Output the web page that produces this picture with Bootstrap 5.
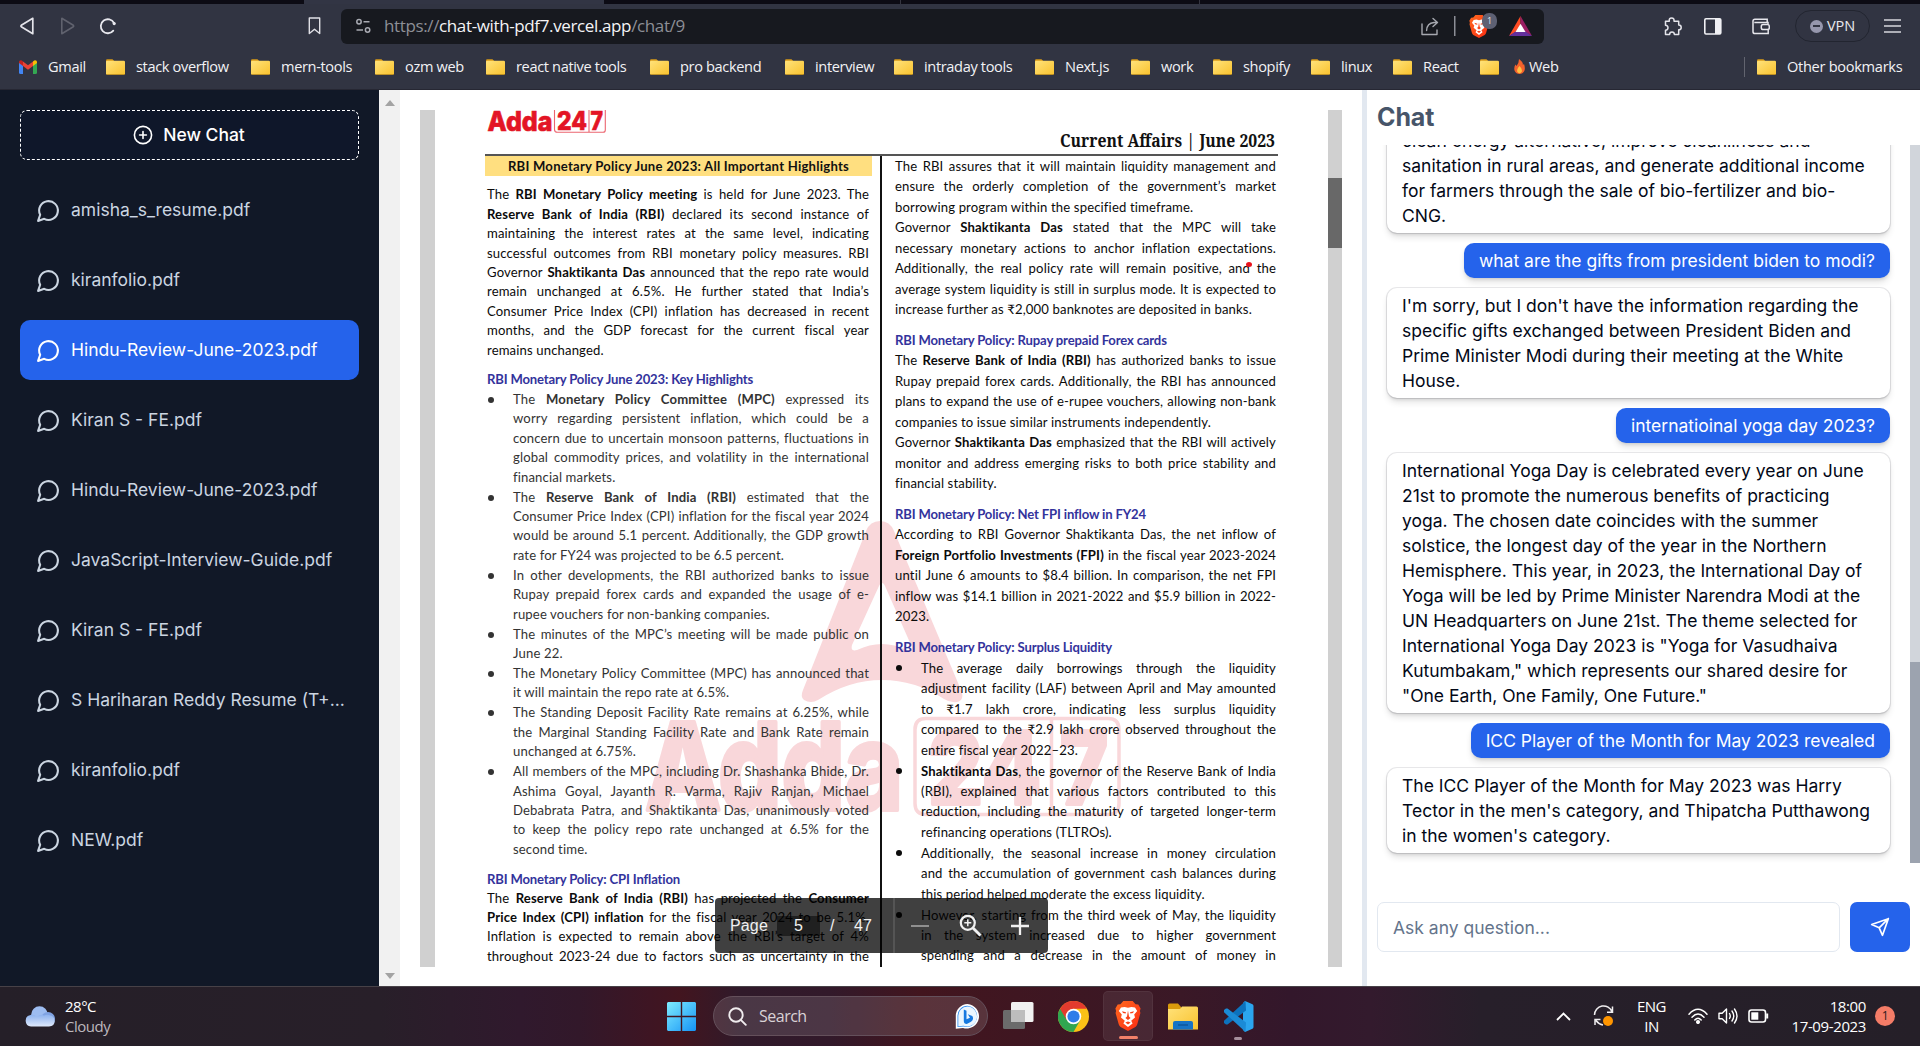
<!DOCTYPE html>
<html lang="en">
<head>
<meta charset="utf-8">
<meta name="viewport" content="width=device-width, initial-scale=1">
<title>Chat with PDF</title>
<link href="https://cdn.jsdelivr.net/npm/bootstrap@5.3.0/dist/css/bootstrap.min.css" rel="stylesheet">
<style>
  html, body { height: 100%; }
  body { font-family: Inter, "Liberation Sans", sans-serif; overflow: hidden; background: #fff; color: #020817; }
  svg { display: block; flex: none; }
  .shell { width: 1920px; height: 1046px; }
  .ui-font { font-family: "Open Sans", "Noto Sans", sans-serif; }

  /* browser chrome */
  .tabstrip { height: 4px; background: #0c0b14; display: grid; grid-template-columns: 304px 300px 297px 299px 1fr; }
  .tabstrip .cur { background: #323544; }
  .tabstrip .sep { border-right: 1px solid #34343f; }
  .browser { background: #313442; height: 86px; border-bottom: 1px solid #262733; }
  .toolbar { height: 45px; padding-top: 5px; }
  .tools { display: grid; grid-template-columns: 40px 39px 209px 1fr; width: 341px; height: 34px; padding-left: 20px; }
  .omni { width: 1203px; height: 35px; border-radius: 6px; background: #17191f; color: #8d8f96; font-size: 17px; letter-spacing: -.37px; padding: 0 0 1px 14px; }
  .omni b { font-weight: 400; color: #f4f4f6; }
  .omni-end { display: grid; grid-template-columns: 33px 15px 40px 35px; align-items: center; }
  .shield { position: relative; width: 20px; height: 22px; }
  .shield span { position: absolute; left: 13px; top: -2px; width: 15px; height: 16px; border-radius: 7px; background: #5d6073; color: #e8e8ee; font-size: 9px; line-height: 16px; text-align: center; letter-spacing: 0; }
  .right-tools { display: grid; grid-template-columns: 40px 48px 43px 89px 20px; align-items: center; height: 34px; margin-left: 120px; }
  .vpn { width: 75px; height: 32px; border: 1px solid #222530; border-radius: 16px; color: #e9e9ee; font-size: 14.5px; letter-spacing: -.1px; }
  .vpn i { width: 13px; height: 13px; border-radius: 50%; background: #9697ad; }
  .vpn i::after { content: ""; width: 7px; height: 2px; background: #313442; }
  .bookmarks { display: grid; grid-template-columns: 87px 145px 124px 111px 164px 135px 109px 141px 96px 82px 98px 82px 87px 264px 1fr; padding-left: 19px; height: 35px; color: #f2f2f5; font-size: 14.6px; letter-spacing: -.36px; }
  .bookmarks > div { display: flex; align-items: center; gap: 11px; white-space: nowrap; }
  .bookmarks .other { border-left: 1px solid #62646f; padding-left: 12px; height: 20px; align-self: center; letter-spacing: -.3px; }

  /* sidebar */
  .side { width: 379px; background: #111827; padding: 20px 20px 0; }
  .newchat { height: 50px; border: 1px dashed #fff; border-radius: 7px; color: #fff; background: #0f172a; font-size: 17.5px; font-weight: 500; gap: 10px; margin-bottom: 20px; padding-right: 1px; }
  .chatrow { height: 60px; margin-bottom: 10px; border-radius: 10px; padding: 0 15px 0 16px; gap: 10px; color: #cbd5e1; font-size: 17.5px; }
  .chatrow.on { background: #2563eb; color: #fff; }
  .sbar { width: 21px; background: #f1f1f1; padding: 10px 0 7px; }
  .sbar i { border: 5px solid transparent; width: 0; height: 0; }
  .sbar .u { border-bottom: 6px solid #a3a3a3; border-top: 0; }
  .sbar .d { border-top: 6px solid #a3a3a3; border-bottom: 0; }

  /* document viewer */
  .viewer { width: 962px; padding: 20px 20px 19px; }
  .gutter { background: #d0d0d0; }
  .gutter.l { width: 15px; }
  .gutter.r { width: 14px; padding-top: 68px; }
  .gutter.r i { display: block; height: 70px; background: #686868; }
  .sheet { position: relative; width: 893px; overflow: hidden; padding: 0 50px; font-family: Lato, "Liberation Sans", sans-serif; font-size: 13.1px; letter-spacing: .14px; color: #0b0b0b; }
  .sheet > .wm { position: absolute; left: 0; top: 0; z-index: 0; letter-spacing: 0; }
  .head { height: 46px; border-bottom: 2px solid #555; letter-spacing: 0; }
  .cols { position: relative; height: 811px; }
  .colL { width: 397px; border-right: 2px solid #111; padding: 0 11px 0 2px; --lh: 19.45px; }
  .colR { flex: 1; padding: 0 2px 0 13px; --lh: 20.45px; }
  .band { background: #ffdf80; height: 20px; line-height: 20px; margin: 0 -3px 9.2px -2px; text-align: center; font-weight: 700; color: #111; letter-spacing: .24px; }
  .ln { line-height: var(--lh); height: var(--lh); white-space: nowrap; text-align: justify; text-align-last: justify; }
  .ln.end { text-align-last: left; }
  .hd { line-height: 20px; font-weight: 700; color: #33339c; letter-spacing: -.16px; white-space: nowrap; margin-top: 9.3px; }
  .colR .hd { margin-top: 10.5px; line-height: 20.4px; }
  .pts { list-style: none; margin: .4px 0 0; padding: 0; }
  .pts li { padding-left: 26px; margin-bottom: .5px; position: relative; }
  .pts li::before { content: ""; position: absolute; left: 1px; top: 7px; width: 6px; height: 6px; border-radius: 50%; background: currentColor; }
  .colL .pts { color: #333; }
  .cursor-dot { position: absolute; left: 811px; top: 152px; width: 6px; height: 5px; border-radius: 50%; background: #e8131d; }
  .pager { position: absolute; left: 280px; top: 788px; width: 333px; height: 55px; background: rgba(0,0,0,.75); border-radius: 4px; color: #f1f1f1; font-family: "Liberation Sans", sans-serif; font-size: 16px; display: grid; grid-template-columns: 47px 53px 24px 39px 18px 48px 52px 1fr; padding-left: 15px; align-items: center; }
  .pager .num { width: 43px; height: 20px; line-height: 19px; text-align: center; background: rgba(0,0,0,.5); }
  .pager .bar { width: 2px; height: 55px; background: #555; }

  /* chat panel */
  .panel { width: 558px; border-left: 5px solid #e2e8f0; }
  .panel h1 { font-size: 25px; font-weight: 700; color: #475569; line-height: 35px; margin: 10px 0 10px 10px; letter-spacing: -.1px; }
  .feed { height: 718px; overflow: hidden; }
  .track { width: 10px; background: #d1d5db; padding-top: 517px; }
  .track i { display: block; height: 201px; background: #9ca3af; }
  .msgs { width: 543px; padding: 0 20px 10px 20px; gap: 10px; justify-content: flex-end; }
  .bubble { font-size: 17.5px; line-height: 25px; padding: 5px 15px; border-radius: 10px; white-space: nowrap; box-shadow: 0 0 0 1px rgba(17,24,39,.1), 0 5px 7px -1px rgba(0,0,0,.12), 0 2px 4px -2px rgba(0,0,0,.2); }
  .bubble.me { align-self: flex-end; background: #2563eb; color: #fff; box-shadow: 0 5px 7px -1px rgba(0,0,0,.12), 0 2px 4px -2px rgba(0,0,0,.2); }
  .ask { padding: 39px 10px 0; gap: 10px; }
  .ask input { width: 463px; height: 50px; border: 1px solid #e2e8f0; border-radius: 7px; font-size: 17.5px; padding: 0 15px; }
  .ask input::placeholder { color: #64748b; opacity: 1; }
  .ask button { width: 60px; height: 50px; border: 0; border-radius: 7px; background: #2563eb; }

  /* taskbar */
  .taskbar { height: 60px; border-top: 1px solid #474147; background: linear-gradient(90deg,#251f28 0,#281f29 380px,#30192d 520px,#32182a 580px,#3e1523 650px,#42151f 680px,#301a2a 740px,#32192a 830px,#42151e 920px,#3a1826 1180px,#33172b 1290px,#331a2d 1370px,#271f2a 1480px,#251f28 100%); color: #fff; display: grid; grid-template-columns: 40px 602px 46px 290px 55px 45px 65px 55px 333px 37px 43px 52px 30px 30px 30px 1fr; padding-left: 25px; padding-bottom: 1px; align-items: center; font-size: 15px; letter-spacing: -.5px; line-height: 20px; }
  .find { width: 275px; height: 40px; border: 1px solid #64505b; border-radius: 20px; background: rgba(255,255,255,.13); padding: 0 7px 0 14px; color: #d9d2d6; font-size: 16px; }
  .tile { width: 50px; height: 50px; border-radius: 5px; background: rgba(255,255,255,.07); border: 1px solid rgba(255,255,255,.05); position: relative; }
  .tile::after { content: ""; position: absolute; left: 15px; bottom: 1px; width: 19px; height: 3px; border-radius: 2px; background: #f08069; }
  .vs { position: relative; }
  .vs::after { content: ""; position: absolute; left: 11px; top: 36px; width: 8px; height: 3px; border-radius: 2px; background: #a58f9c; }
  .cond { color: #bdb8be; }
  .clock { width: 88px; letter-spacing: -.38px; }
  .alertdot { width: 20px; height: 20px; border-radius: 50%; background: #f47c67; color: #2b1a1c; font-size: 12px; text-align: center; line-height: 20px; margin-left: 9px; }
</style>
<script src="https://cdn.jsdelivr.net/npm/bootstrap@5.3.0/dist/js/bootstrap.bundle.min.js"></script>
</head>
<body>
<svg width="0" height="0" class="position-absolute" aria-hidden="true">
  <defs>
    <linearGradient id="gf" x1="0" y1="0" x2="1" y2="1"><stop offset="0" stop-color="#ffe27a"/><stop offset="1" stop-color="#f9c22e"/></linearGradient>
    <linearGradient id="gw" x1="0" y1="0" x2="1" y2="1"><stop offset="0" stop-color="#7fecff"/><stop offset="1" stop-color="#1593f5"/></linearGradient>
    <linearGradient id="gc" x1="0" y1="0" x2="0" y2="1"><stop offset="0" stop-color="#8eb2ee"/><stop offset="1" stop-color="#dfe9fb"/></linearGradient>
    <linearGradient id="gb" x1="0" y1="0" x2="1" y2="1"><stop offset="0" stop-color="#ff6a1f"/><stop offset="1" stop-color="#fb2a12"/></linearGradient>
    <symbol id="folder" viewBox="0 0 19 16"><path d="M0 1.500Q0 .3 1.200.3H6.500L8.200 2V5H0Z" fill="#d99a17"/><rect x="0" y="1.800" width="19" height="14" rx="1.300" fill="url(#gf)"/><path d="M.5 15.600H18.500" stroke="#b98618" stroke-width=".7"/></symbol>
    <symbol id="bubble" viewBox="0 0 24 24"><path d="M7.900 20A9 9 0 1 0 4 16.100L2 22Z" fill="none" stroke="currentColor" stroke-width="2" stroke-linecap="round" stroke-linejoin="round"/></symbol>
    <symbol id="lion" viewBox="0 0 26 30"><path d="M5.500 3.200 8.300 0H17.700L20.500 3.200 23.300 3.600 25.600 7.600 24.900 10 25.400 12 22.300 23.200Q21.800 25 20.400 26L13 30 5.600 26Q4.200 25 3.700 23.200L.6 12 1.100 10 .4 7.600 2.700 3.600Z" fill="url(#gb)"/><path d="M6 6.500 9.600 6 13 6.800 16.400 6 20 6.500 22.200 10 19.200 13.600 20 16.500 16.200 19.800 17.600 22.500 13 26 8.400 22.500 9.800 19.800 6 16.500 6.800 13.600 3.800 10Z" fill="#fff"/><path d="M7 10.200 11 11.300 10.600 12.600 8 12ZM19 10.200 15 11.300 15.400 12.600 18 12ZM13 9.500 12 15.500 10.400 17 13 19 15.600 17 14 15.500Z" fill="#f8431a"/><path d="M10.300 21.600 13 20.400 15.700 21.600 13 23.400Z" fill="#f8431a"/></symbol>
  </defs>
</svg>

<div class="shell d-flex flex-column">
  <div class="tabstrip"><div></div><div class="cur"></div><div class="sep"></div><div class="sep"></div><div></div></div>

  <header class="browser ui-font">
    <div class="toolbar d-flex">
      <div class="tools align-items-center">
        <svg width="15" height="18" viewBox="0 0 15 18" fill="none" stroke="#e4e4ea" stroke-width="1.700" stroke-linejoin="round"><path d="M12.800 1.300V16.700L1.300 9.800Q.6 9 1.300 8.200Z"/></svg>
        <svg width="15" height="18" viewBox="0 0 15 18" fill="none" stroke="#60626e" stroke-width="1.600" stroke-linejoin="round"><path d="M1.800 1.300V16.700L13.300 9.800Q14 9 13.300 8.200Z"/></svg>
        <svg width="18" height="18" viewBox="0 0 18 18" fill="none" stroke="#e8e8ee" stroke-width="1.800"><path d="M15 6A7 7 0 1 0 14.300 13.600" stroke-linecap="round"/><circle cx="15.200" cy="6.600" r="1.600" fill="#e8e8ee" stroke="none"/></svg>
        <svg width="14" height="18" viewBox="0 0 14 18" fill="none" stroke="#e0e0e6" stroke-width="1.400" stroke-linejoin="round"><path d="M1.300 1H11.700V16.500L6.500 12.200 1.300 16.500Z"/></svg>
      </div>
      <div class="omni d-flex align-items-center">
        <svg class="me-2" width="17" height="16" viewBox="0 0 17 16" fill="none" stroke="#a9abb3" stroke-width="1.500"><circle cx="4" cy="3.800" r="2.200"/><path d="M8.500 3.800H14.500M1.500 12H8"/><circle cx="12.600" cy="12" r="2.200"/></svg>
        <div class="flex-grow-1 ps-1">https://<b>chat-with-pdf7.vercel.app</b>/chat/9</div>
        <div class="omni-end">
          <svg width="18" height="19" viewBox="0 0 18 19" fill="none" stroke="#a6a8af" stroke-width="1.400" stroke-linecap="round" stroke-linejoin="round"><path d="M1 7V17.500H16V13M12 1.500 16.500 5.500 12 9.500M16 5.500H13Q6 6 5.600 13.500"/></svg>
          <svg width="2" height="20"><rect width="1.500" height="20" fill="#8c8e96"/></svg>
          <div class="shield"><svg width="20" height="23"><use href="#lion"/></svg><span>1</span></div>
          <svg width="23" height="20" viewBox="0 0 23 20"><path d="M11.500 0 0 20 11.500 13Z" fill="#ff4b23"/><path d="M11.500 0 23 20 11.500 13Z" fill="#9a1e63"/><path d="M0 20H23L11.500 12Z" fill="#63309c"/><path d="M11.500 7.800 16.500 16H6.500Z" fill="#fff"/></svg>
        </div>
      </div>
      <div class="right-tools">
        <svg width="18" height="19" viewBox="0 0 18 19" fill="none" stroke="#e4e4ea" stroke-width="1.500" stroke-linejoin="round"><path d="M1.500 4.200H5.300Q4.800 1 7.600 1T10 4.200H14.700V8Q17.200 8 17.200 10.400T14.700 12.800V17.500H10.400Q10.400 14.900 8 14.900T5.600 17.500H1.500V13.200Q4 13 4 10.700T1.500 8.200Z"/></svg>
        <svg width="18" height="17" viewBox="0 0 18 17"><rect x=".8" y=".8" width="16" height="15.200" rx="1.200" fill="none" stroke="#f0f0f4" stroke-width="1.600"/><rect x="11" y="1" width="6" height="15" fill="#f0f0f4"/></svg>
        <svg width="18" height="17" viewBox="0 0 18 17" fill="none" stroke="#e6e6ec" stroke-width="1.500"><path d="M16 6V4.400H2.300M15.200 4.200V1.200H3Q1 1.200 1 3V13.700Q1 15.600 3 15.600H16.200V12"/><rect x="9.300" y="6.600" width="8" height="5" rx="1.800"/></svg>
        <div class="vpn d-flex align-items-center justify-content-center"><i class="d-flex align-items-center justify-content-center me-1"></i>VPN</div>
        <svg width="17" height="14" stroke="#d6d6dd" stroke-width="1.500"><path d="M0 1H17M0 7H17M0 13H17"/></svg>
      </div>
    </div>
    <div class="bookmarks">
      <div><svg width="18" height="14" viewBox="0 0 18 14"><path d="M0 2V12.500Q0 14 1.500 14H4V5Z" fill="#4285f4"/><path d="M18 2V12.500Q18 14 16.500 14H14V5Z" fill="#34a853"/><path d="M14 5V1.500Q16-.6 17.500.7 18 1.200 18 3L14 6Z" fill="#fbbc04"/><path d="M4 1.500 9 5.300 14 1.500V6L9 9.800 4 6Z" fill="#ea4335"/><path d="M4 6V1.500Q2-.6.5.7 0 1.200 0 3Z" fill="#c5221f"/></svg>Gmail</div>
      <div><svg width="19" height="16"><use href="#folder"/></svg>stack overflow</div>
      <div><svg width="19" height="16"><use href="#folder"/></svg>mern-tools</div>
      <div><svg width="19" height="16"><use href="#folder"/></svg>ozm web</div>
      <div><svg width="19" height="16"><use href="#folder"/></svg>react native tools</div>
      <div><svg width="19" height="16"><use href="#folder"/></svg>pro backend</div>
      <div><svg width="19" height="16"><use href="#folder"/></svg>interview</div>
      <div><svg width="19" height="16"><use href="#folder"/></svg>intraday tools</div>
      <div><svg width="19" height="16"><use href="#folder"/></svg>Next.js</div>
      <div><svg width="19" height="16"><use href="#folder"/></svg>work</div>
      <div><svg width="19" height="16"><use href="#folder"/></svg>shopify</div>
      <div><svg width="19" height="16"><use href="#folder"/></svg>linux</div>
      <div><svg width="19" height="16"><use href="#folder"/></svg>React</div>
      <div><svg width="19" height="16"><use href="#folder"/></svg><span class="d-flex align-items-center gap-1 ps-1"><svg width="11" height="15" viewBox="0 0 11 15"><path d="M5 0Q9.500 3.500 8.800 6L10 5Q11.500 9 10.300 12 8.800 15 5.500 15T.7 12Q-.5 8.500 1.500 5.500L2.500 7Q5 4 5 0Z" fill="#f4622c"/><path d="M5.500 7Q8.500 10 7.800 12.500 7 14.300 5.500 14.300T3.200 12.500Q2.600 10 5.500 7Z" fill="#ffc043"/></svg>Web</span></div>
      <div class="other"><svg width="19" height="16"><use href="#folder"/></svg>Other bookmarks</div>
    </div>
  </header>

  <main class="d-flex flex-grow-1">
    <nav class="side">
      <div class="newchat d-flex align-items-center justify-content-center"><svg width="20" height="20" viewBox="0 0 20 20" fill="none" stroke="#fff" stroke-width="1.600" stroke-linecap="round"><circle cx="10" cy="10" r="8.600"/><path d="M10 6.600V13.400M6.600 10H13.400"/></svg>New Chat</div>
      <div class="chatrow d-flex align-items-center"><svg width="25" height="25"><use href="#bubble"/></svg><span>amisha_s_resume.pdf</span></div>
      <div class="chatrow d-flex align-items-center"><svg width="25" height="25"><use href="#bubble"/></svg><span>kiranfolio.pdf</span></div>
      <div class="chatrow on d-flex align-items-center"><svg width="25" height="25"><use href="#bubble"/></svg><span>Hindu-Review-June-2023.pdf</span></div>
      <div class="chatrow d-flex align-items-center"><svg width="25" height="25"><use href="#bubble"/></svg><span>Kiran S - FE.pdf</span></div>
      <div class="chatrow d-flex align-items-center"><svg width="25" height="25"><use href="#bubble"/></svg><span>Hindu-Review-June-2023.pdf</span></div>
      <div class="chatrow d-flex align-items-center"><svg width="25" height="25"><use href="#bubble"/></svg><span>JavaScript-Interview-Guide.pdf</span></div>
      <div class="chatrow d-flex align-items-center"><svg width="25" height="25"><use href="#bubble"/></svg><span>Kiran S - FE.pdf</span></div>
      <div class="chatrow d-flex align-items-center"><svg width="25" height="25"><use href="#bubble"/></svg><span class="text-nowrap">S Hariharan Reddy Resume (T+...</span></div>
      <div class="chatrow d-flex align-items-center"><svg width="25" height="25"><use href="#bubble"/></svg><span>kiranfolio.pdf</span></div>
      <div class="chatrow d-flex align-items-center"><svg width="25" height="25"><use href="#bubble"/></svg><span>NEW.pdf</span></div>
    </nav>
    <div class="sbar d-flex flex-column justify-content-between align-items-center"><i class="u"></i><i class="d"></i></div>

    <section class="viewer d-flex">
      <div class="gutter l"></div>
      <div class="sheet">
        <!-- watermark; user units are sheet pixels -->
        <svg class="wm" width="893" height="857" viewBox="435 110 893 857" fill="#f9d7da" font-family="Inter, sans-serif" font-weight="800">
          <path d="M880 521Q890 521 894 531L961 690Q965 700 957 702 950 703 944 699 915 680 882 680T818 700Q811 704 804 700 800 697 803 690L866 531Q870 521 880 521ZM882 583Q880 583 879 586L852 645Q850 652 857 650 882 638 907 650 914 652 911 645L885 586Q884 583 882 583Z" fill-rule="evenodd"/>
          <g stroke="#f9d7da" stroke-width="4" stroke-linejoin="round">
            <text x="645" y="810" font-size="121" textLength="258" lengthAdjust="spacingAndGlyphs">Adda</text>
            <text x="928" y="804" font-size="101" textLength="113" lengthAdjust="spacingAndGlyphs">24</text>
            <text x="1060" y="804" font-size="101" textLength="48" lengthAdjust="spacingAndGlyphs">7</text>
          </g>
          <path d="M1051.500 719V814M926 718.500H1108Q1119 718.500 1119 729.500V803.500Q1119 814.500 1108 814.500H926Q915 814.500 915 803.500V729.500Q915 718.500 926 718.500Z" fill="none" stroke="#f9d7da" stroke-width="3.500"/>
        </svg>
        <div class="head d-flex justify-content-between">
          <svg width="121" height="24" viewBox="0 0 121 24" fill="#e31525" font-family="Inter, sans-serif" font-weight="800"><g stroke="#e31525" stroke-width=".7"><text x="2.500" y="21.300" font-size="27.500" textLength="65" lengthAdjust="spacingAndGlyphs">Adda</text><text x="72" y="19.700" font-size="25.500" textLength="30" lengthAdjust="spacingAndGlyphs">24</text><text x="105.500" y="19.700" font-size="25.500" textLength="12.500" lengthAdjust="spacingAndGlyphs">7</text></g><path d="M69.500 0V19.500Q69.500 22.300 72.500 22.300H118Q120.300 22.300 120.300 20V0M104 0V22" fill="none" stroke="#ec6570" stroke-width="1.100"/></svg>
          <svg class="align-self-end" width="220" height="28" viewBox="0 0 220 28" fill="#111" font-family="Noto Serif, Liberation Serif, serif" font-weight="700" font-size="18"><text x="2" y="21" textLength="215" lengthAdjust="spacingAndGlyphs">Current Affairs | June 2023</text></svg>
        </div>
        <div class="cols d-flex">
          <div class="colL">
            <div class="band">RBI Monetary Policy June 2023: All Important Highlights</div>
            <div class="ln">The <b>RBI Monetary Policy meeting</b> is held for June 2023. The</div>
            <div class="ln"><b>Reserve Bank of India (RBI)</b> declared its second instance of</div>
            <div class="ln">maintaining the interest rates at the same level, indicating</div>
            <div class="ln">successful outcomes from RBI monetary policy measures. RBI</div>
            <div class="ln">Governor <b>Shaktikanta Das</b> announced that the repo rate would</div>
            <div class="ln">remain unchanged at 6.5%. He further stated that India’s</div>
            <div class="ln">Consumer Price Index (CPI) inflation has decreased in recent</div>
            <div class="ln">months, and the GDP forecast for the current fiscal year</div>
            <div class="ln end">remains unchanged.</div>
            <div class="hd">RBI Monetary Policy June 2023: Key Highlights</div>
            <ul class="pts">
              <li><div class="ln">The <b>Monetary Policy Committee (MPC)</b> expressed its</div><div class="ln">worry regarding persistent inflation, which could be a</div><div class="ln">concern due to uncertain monsoon patterns, fluctuations in</div><div class="ln">global commodity prices, and volatility in the international</div><div class="ln end">financial markets.</div></li>
              <li><div class="ln">The <b>Reserve Bank of India (RBI)</b> estimated that the</div><div class="ln">Consumer Price Index (CPI) inflation for the fiscal year 2024</div><div class="ln">would be around 5.1 percent. Additionally, the GDP growth</div><div class="ln end">rate for FY24 was projected to be 6.5 percent.</div></li>
              <li><div class="ln">In other developments, the RBI authorized banks to issue</div><div class="ln">Rupay prepaid forex cards and expanded the usage of e-</div><div class="ln end">rupee vouchers for non-banking companies.</div></li>
              <li><div class="ln">The minutes of the MPC’s meeting will be made public on</div><div class="ln end">June 22.</div></li>
              <li><div class="ln">The Monetary Policy Committee (MPC) has announced that</div><div class="ln end">it will maintain the repo rate at 6.5%.</div></li>
              <li><div class="ln">The Standing Deposit Facility Rate remains at 6.25%, while</div><div class="ln">the Marginal Standing Facility Rate and Bank Rate remain</div><div class="ln end">unchanged at 6.75%.</div></li>
              <li><div class="ln">All members of the MPC, including Dr. Shashanka Bhide, Dr.</div><div class="ln">Ashima Goyal, Jayanth R. Varma, Rajiv Ranjan, Michael</div><div class="ln">Debabrata Patra, and Shaktikanta Das, unanimously voted</div><div class="ln">to keep the policy repo rate unchanged at 6.5% for the</div><div class="ln end">second time.</div></li>
            </ul>
            <div class="hd">RBI Monetary Policy: CPI Inflation</div>
            <div class="ln">The <b>Reserve Bank of India (RBI)</b> has projected the <b>Consumer</b></div>
            <div class="ln"><b>Price Index (CPI) inflation</b> for the fiscal year 2024 to be 5.1%.</div>
            <div class="ln">Inflation is expected to remain above the RBI’s target of 4%</div>
            <div class="ln">throughout 2023-24 due to factors such as uncertainty in the</div>
          </div>
          <div class="colR">
            <div class="ln">The RBI assures that it will maintain liquidity management and</div>
            <div class="ln">ensure the orderly completion of the government’s market</div>
            <div class="ln end">borrowing program within the specified timeframe.</div>
            <div class="ln">Governor <b>Shaktikanta Das</b> stated that the MPC will take</div>
            <div class="ln">necessary monetary actions to anchor inflation expectations.</div>
            <div class="ln">Additionally, the real policy rate will remain positive, and the</div>
            <div class="ln">average system liquidity is still in surplus mode. It is expected to</div>
            <div class="ln end">increase further as ₹2,000 banknotes are deposited in banks.</div>
            <div class="hd">RBI Monetary Policy: Rupay prepaid Forex cards</div>
            <div class="ln">The <b>Reserve Bank of India (RBI)</b> has authorized banks to issue</div>
            <div class="ln">Rupay prepaid forex cards. Additionally, the RBI has announced</div>
            <div class="ln">plans to expand the use of e-rupee vouchers, allowing non-bank</div>
            <div class="ln end">companies to issue similar instruments independently.</div>
            <div class="ln">Governor <b>Shaktikanta Das</b> emphasized that the RBI will actively</div>
            <div class="ln">monitor and address emerging risks to both price stability and</div>
            <div class="ln end">financial stability.</div>
            <div class="hd">RBI Monetary Policy: Net FPI inflow in FY24</div>
            <div class="ln">According to RBI Governor Shaktikanta Das, the net inflow of</div>
            <div class="ln"><b>Foreign Portfolio Investments (FPI)</b> in the fiscal year 2023-2024</div>
            <div class="ln">until June 6 amounts to $8.4 billion. In comparison, the net FPI</div>
            <div class="ln">inflow was $14.1 billion in 2021-2022 and $5.9 billion in 2022-</div>
            <div class="ln end">2023.</div>
            <div class="hd">RBI Monetary Policy: Surplus Liquidity</div>
            <ul class="pts">
              <li><div class="ln">The average daily borrowings through the liquidity</div><div class="ln">adjustment facility (LAF) between April and May amounted</div><div class="ln">to ₹1.7 lakh crore, indicating less surplus liquidity</div><div class="ln">compared to the ₹2.9 lakh crore observed throughout the</div><div class="ln end">entire fiscal year 2022–23.</div></li>
              <li><div class="ln"><b>Shaktikanta Das</b>, the governor of the Reserve Bank of India</div><div class="ln">(RBI), explained that various factors contributed to this</div><div class="ln">reduction, including the maturity of targeted longer-term</div><div class="ln end">refinancing operations (TLTROs).</div></li>
              <li><div class="ln">Additionally, the seasonal increase in money circulation</div><div class="ln">and the accumulation of government cash balances during</div><div class="ln end">this period helped moderate the excess liquidity.</div></li>
              <li><div class="ln">However, starting from the third week of May, the liquidity</div><div class="ln">in the system increased due to higher government</div><div class="ln">spending and a decrease in the amount of money in</div></li>
            </ul>
          </div>
        </div>
        <span class="cursor-dot"></span>
        <div class="pager">
          <span>Page</span><span class="num">5</span><span>/</span><span>47</span><span class="bar"></span>
          <svg width="18" height="2"><rect width="18" height="2" fill="#8f8f8f"/></svg>
          <svg width="23" height="23" viewBox="0 0 23 23" fill="none" stroke="#f1f1f1" stroke-width="2.200"><circle cx="8.800" cy="8.800" r="7"/><path d="M14 14 21.500 21.500" stroke-width="2.800"/><path d="M8.800 5.300V12.300M5.300 8.800H12.300" stroke-width="1.500"/></svg>
          <svg width="18" height="18" stroke="#f1f1f1" stroke-width="2.300"><path d="M9 0V18M0 9H18"/></svg>
        </div>
      </div>
      <div class="gutter r"><i></i></div>
    </section>

    <aside class="panel">
      <h1>Chat</h1>
      <div class="feed d-flex">
        <div class="msgs d-flex flex-column">
          <div class="bubble">clean energy alternative, improve cleanliness and<br>sanitation in rural areas, and generate additional income<br>for farmers through the sale of bio-fertilizer and bio-<br>CNG.</div>
          <div class="bubble me">what are the gifts from president biden to modi?</div>
          <div class="bubble">I'm sorry, but I don't have the information regarding the<br>specific gifts exchanged between President Biden and<br>Prime Minister Modi during their meeting at the White<br>House.</div>
          <div class="bubble me">internatioinal yoga day 2023?</div>
          <div class="bubble">International Yoga Day is celebrated every year on June<br>21st to promote the numerous benefits of practicing<br>yoga. The chosen date coincides with the summer<br>solstice, the longest day of the year in the Northern<br>Hemisphere. This year, in 2023, the International Day of<br>Yoga will be led by Prime Minister Narendra Modi at the<br>UN Headquarters on June 21st. The theme selected for<br>International Yoga Day 2023 is "Yoga for Vasudhaiva<br>Kutumbakam," which represents our shared desire for<br>"One Earth, One Family, One Future."</div>
          <div class="bubble me">ICC Player of the Month for May 2023 revealed</div>
          <div class="bubble">The ICC Player of the Month for May 2023 was Harry<br>Tector in the men's category, and Thipatcha Putthawong<br>in the women's category.</div>
        </div>
        <div class="track"><i></i></div>
      </div>
      <div class="ask d-flex">
        <input type="text" placeholder="Ask any question...">
        <button class="d-flex align-items-center justify-content-center" aria-label="Send"><svg width="20" height="20" viewBox="0 0 24 24" fill="none" stroke="#fff" stroke-width="2" stroke-linecap="round" stroke-linejoin="round"><path d="M22 2 15 22 11 13 2 9ZM22 2 11 13"/></svg></button>
      </div>
    </aside>
  </main>

  <footer class="taskbar ui-font">
    <svg width="30" height="21" viewBox="0 0 30 21"><circle cx="14.500" cy="8.500" r="8.300" fill="#9dbcf0"/><circle cx="23" cy="13" r="7" fill="#7fa2e2"/><path d="M6 20.500A5.800 5.800 0 0 1 5.500 9Q9 8 12 11 15 7.500 19 9.500 21 8.500 24 9 29.700 10 29.700 15T24 20.500Z" fill="url(#gc)"/></svg>
    <div>28°C<br><span class="cond">Cloudy</span></div>
    <svg width="29" height="29" viewBox="0 0 29 29" fill="url(#gw)"><path d="M1 0H13.800V13.800H0V1ZM15.200 0H28L29 1V13.800H15.200ZM0 15.200H13.800V29H1L0 28ZM15.200 15.200H29V28L28 29H15.200Z"/></svg>
    <div class="find d-flex align-items-center">
      <svg class="me-1" width="19" height="19" viewBox="0 0 19 19" fill="none" stroke="#f0ecee" stroke-width="1.900" stroke-linecap="round"><circle cx="8" cy="8" r="6.700"/><path d="M12.800 12.800 17.800 17.800"/></svg>
      <span class="flex-grow-1 ps-2">Search</span>
      <svg width="25" height="25" viewBox="0 0 25 25"><path d="M12.500 0A12.300 12.300 0 1 1 8 24L.8 24.800V12.500A12 12 0 0 1 12.500 0Z" fill="#fff"/><path d="M12.500 1.800A10.600 10.600 0 1 1 8.500 22.500L2.500 23V12.500A10 10 0 0 1 12.500 1.800Z" fill="#2a8cf0"/><path d="M12.500 2.600A9.900 9.900 0 1 1 8.500 21.700L3.300 22.200V12.500A9.300 9.300 0 0 1 12.500 2.600Z" fill="#eaf6ff"/><path d="M8.800 5.500 11.500 6.800V15.300L15 13.700 12.800 10.300 17.300 12Q19.300 15.500 16 17.700L11.800 20Q8.800 20 8.800 17Z" fill="#1679e0"/></svg>
    </div>
    <svg width="31" height="28" viewBox="0 0 31 28"><rect x="0" y="8" width="22" height="19" rx="1.500" fill="#6b6b6b"/><rect x="8" y="0" width="22.500" height="20" rx="1.500" fill="#f1f1f1"/><path d="M8 8H22V20H8Z" fill="#bdbdbd"/></svg>
    <svg width="31" height="31" viewBox="0 0 30 30"><circle cx="15" cy="15" r="15" fill="#fbc116"/><path d="M15 15 2 7.500A15 15 0 0 0 15 30L21.500 18.700Z" fill="#30a650"/><path d="M2 7.500A15 15 0 0 1 28 7.500H15L8.500 18.700Z" fill="#e33b2e"/><circle cx="15" cy="15" r="7.500" fill="#fff"/><circle cx="15" cy="15" r="5.900" fill="#2f7de9"/></svg>
    <div class="tile d-flex align-items-center justify-content-center"><svg width="26" height="30"><use href="#lion"/></svg></div>
    <svg width="30" height="27" viewBox="0 0 30 27"><path d="M0 2Q0 .5 1.500.5H10L13 4V10H0Z" fill="#d99a0c"/><path d="M0 6H12L14 3.500H28.500Q30 3.500 30 5V26.500H0Z" fill="url(#gf)"/><path d="M5 20Q5 18 7 18H23Q25 18 25 20V26.500H5Z" fill="#1673c5"/><path d="M10 22H20" stroke="#0d4f92" stroke-width="1.200"/></svg>
    <div class="vs"><svg width="31" height="31" viewBox="0 0 31 31"><path d="M22 0 29.500 3.300Q30.500 4 30.500 5V26Q30.500 27 29.500 27.700L22 31 20 29V2Z" fill="#2ba5ee"/><path d="M22.500 0 1 19.800V22L3 23.500 4.500 23.500 23 9.500Z" fill="#0c72bd"/><path d="M22.500 31 1 11.200V9L3 7.500H4.500L23 21.500Z" fill="#1b8bd6"/></svg></div>
    <svg width="15" height="9" viewBox="0 0 15 9" fill="none" stroke="#fff" stroke-width="1.800"><path d="M1 8 7.500 1.500 14 8"/></svg>
    <svg width="22" height="22" viewBox="0 0 22 22" fill="none" stroke="#f0eef0" stroke-width="1.500"><path d="M1.500 10A9 9 0 0 1 19 7M19.500 1.500V7.300H14M2 20V14.500H7.500M3 15.500Q6 19.500 10 20"/><circle cx="15" cy="16" r="5" fill="#ff9500" stroke="none"/></svg>
    <div class="text-center" style="width:31px">ENG<br>IN</div>
    <svg width="20" height="16" viewBox="0 0 20 16" fill="none" stroke="#fff" stroke-width="1.500" stroke-linecap="round"><path d="M1 6.200Q10-3.500 19 6.200M4 9.200Q10 2.700 16 9.200M6.800 12Q10 8.500 13.200 12"/><circle cx="10" cy="14" r="1.300" fill="#fff"/></svg>
    <svg width="20" height="18" viewBox="0 0 20 18" fill="none" stroke="#fff" stroke-width="1.400" stroke-linejoin="round" stroke-linecap="round"><path d="M1 6.200H4.200L8.500 2V16L4.200 11.800H1ZM11.500 6.500Q13 9 11.500 11.500M14 4Q17.500 9 14 14M16.500 2Q21.500 9 16.500 16"/></svg>
    <svg width="21" height="14" viewBox="0 0 21 14" fill="none" stroke="#fff" stroke-width="1.600"><rect x="1" y="1" width="16.500" height="12" rx="2.500"/><rect x="3.300" y="3.300" width="7" height="7.400" fill="#fff" stroke="none"/><path d="M19.200 4.500V9.500" stroke-width="2"/></svg>
    <div class="d-flex align-items-center"><div class="clock text-end">18:00<br>17-09-2023</div><span class="alertdot">1</span></div>
  </footer>
</div>
</body>
</html>
